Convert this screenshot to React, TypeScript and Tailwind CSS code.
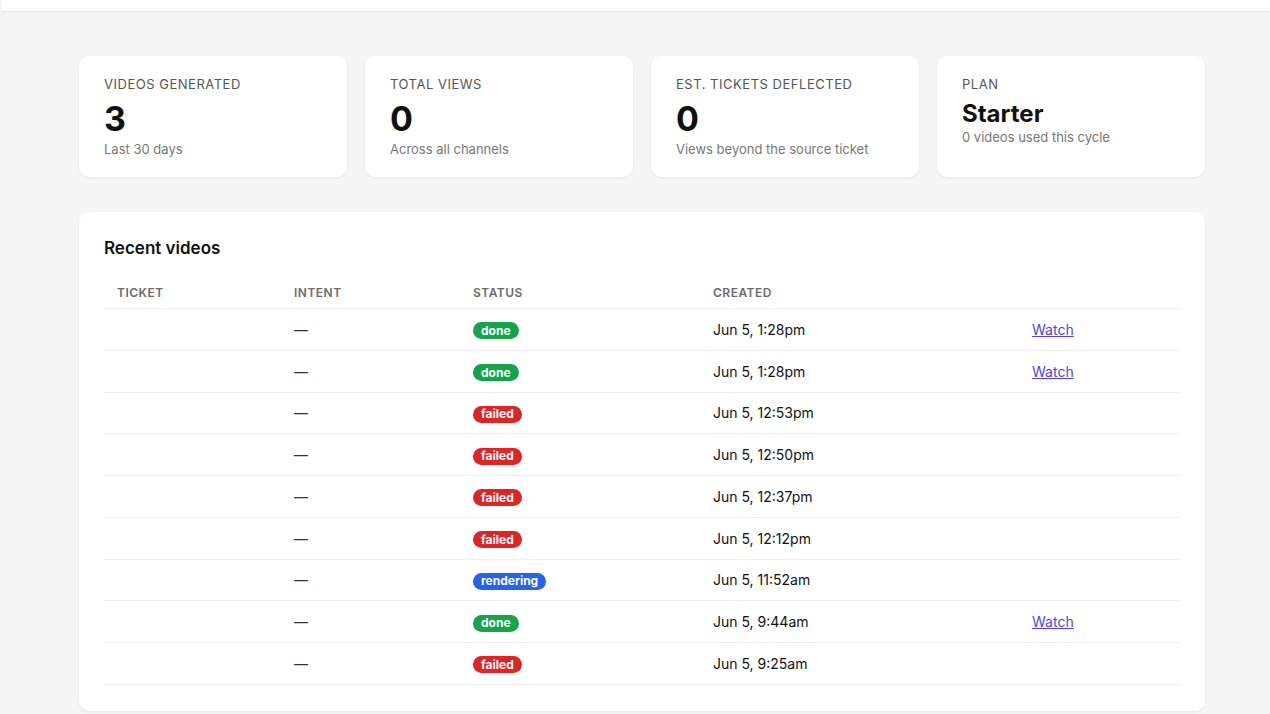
import React from 'react'

type Status = 'done' | 'failed' | 'rendering'

const stats = [
  { label: 'Videos generated', value: '3', sub: 'Last 30 days' },
  { label: 'Total views', value: '0', sub: 'Across all channels' },
  { label: 'Est. tickets deflected', value: '0', sub: 'Views beyond the source ticket' },
]

const videos: { status: Status; created: string; watch: boolean }[] = [
  { status: 'done', created: 'Jun 5, 1:28pm', watch: true },
  { status: 'done', created: 'Jun 5, 1:28pm', watch: true },
  { status: 'failed', created: 'Jun 5, 12:53pm', watch: false },
  { status: 'failed', created: 'Jun 5, 12:50pm', watch: false },
  { status: 'failed', created: 'Jun 5, 12:37pm', watch: false },
  { status: 'failed', created: 'Jun 5, 12:12pm', watch: false },
  { status: 'rendering', created: 'Jun 5, 11:52am', watch: false },
  { status: 'done', created: 'Jun 5, 9:44am', watch: true },
  { status: 'failed', created: 'Jun 5, 9:25am', watch: false },
]

const badgeColors: Record<Status, string> = {
  done: 'bg-[#16a34a]',
  failed: 'bg-[#dc2626]',
  rendering: 'bg-[#2563eb]',
}

function Badge({ status }: { status: Status }) {
  return (
    <span
      className={`inline-flex h-[17px] items-center rounded-full px-[8px] text-[12px] font-bold leading-none text-white ${badgeColors[status]}`}
    >
      {status}
    </span>
  )
}

function Card({ children }: { children: React.ReactNode }) {
  return (
    <div className="rounded-[10px] bg-white shadow-[0_1px_3px_rgba(0,0,0,0.07)]">{children}</div>
  )
}

export default function App() {
  return (
    <div className="min-h-[714px] bg-[#f5f5f5] font-['Inter',sans-serif] text-[#111]">
      {/* Top bar */}
      <div className="ml-[2px] h-[12px] border-b border-[#e8e8ea] bg-white" />

      <div className="ml-[79px] w-[1126px] pt-[44px]">
        {/* Stats */}
        <div className="grid grid-cols-4 gap-[18px]">
          {stats.map((s) => (
            <Card key={s.label}>
              <div className="h-[121px] px-[25px] pt-[20px]">
                <div className="text-[13px] uppercase leading-[17px] tracking-[0.04em] text-[#555]">{s.label}</div>
                <div className="mt-[5px] text-[34px] font-bold leading-[42px]">{s.value}</div>
                <div className="text-[13px] leading-[18px] text-[#777]">{s.sub}</div>
              </div>
            </Card>
          ))}
          <Card>
            <div className="h-[121px] px-[25px] pt-[20px]">
              <div className="text-[13px] uppercase leading-[17px] tracking-[0.04em] text-[#555]">Plan</div>
              <div className="mt-[7px] text-[24px] font-bold leading-[28px]">Starter</div>
              <div className="text-[13px] leading-[18px] text-[#777]">0 videos used this cycle</div>
            </div>
          </Card>
        </div>

        {/* Recent videos */}
        <div className="mt-[35px]">
          <Card>
            <div className="px-[25px] pt-[26px] pb-[26px]">
              <h2 className="text-[17px] font-semibold leading-[20px]">Recent videos</h2>
              <table className="mt-[19px] w-full border-collapse text-left">
                <thead>
                  <tr className="border-b border-[#efefef]">
                    <th className="w-[177px] pt-[9px] pb-[8px] pl-[13px] text-[12px] font-semibold uppercase leading-[14px] tracking-[0.04em] text-[#6b6b6b]">Ticket</th>
                    <th className="w-[179px] pt-[9px] pb-[8px] pl-[13px] text-[12px] font-semibold uppercase leading-[14px] tracking-[0.04em] text-[#6b6b6b]">Intent</th>
                    <th className="w-[240px] pt-[9px] pb-[8px] pl-[13px] text-[12px] font-semibold uppercase leading-[14px] tracking-[0.04em] text-[#6b6b6b]">Status</th>
                    <th className="w-[319px] pt-[9px] pb-[8px] pl-[13px] text-[12px] font-semibold uppercase leading-[14px] tracking-[0.04em] text-[#6b6b6b]">Created</th>
                    <th className="pt-[9px] pb-[8px] pl-[13px]" />
                  </tr>
                </thead>
                <tbody>
                  {videos.map((v, i) => (
                    <tr key={i} className="h-[41.75px] border-b border-[#efefef] text-[14px]">
                      <td className="pl-[13px]" />
                      <td className="pl-[13px] text-[#333]">—</td>
                      <td className="pl-[13px]">
                        <Badge status={v.status} />
                      </td>
                      <td className="pl-[13px]">{v.created}</td>
                      <td className="pl-[13px]">
                        {v.watch && (
                          <a href="#" className="text-[#4f46e5] underline">
                            Watch
                          </a>
                        )}
                      </td>
                    </tr>
                  ))}
                </tbody>
              </table>
            </div>
          </Card>
        </div>
      </div>
    </div>
  )
}
